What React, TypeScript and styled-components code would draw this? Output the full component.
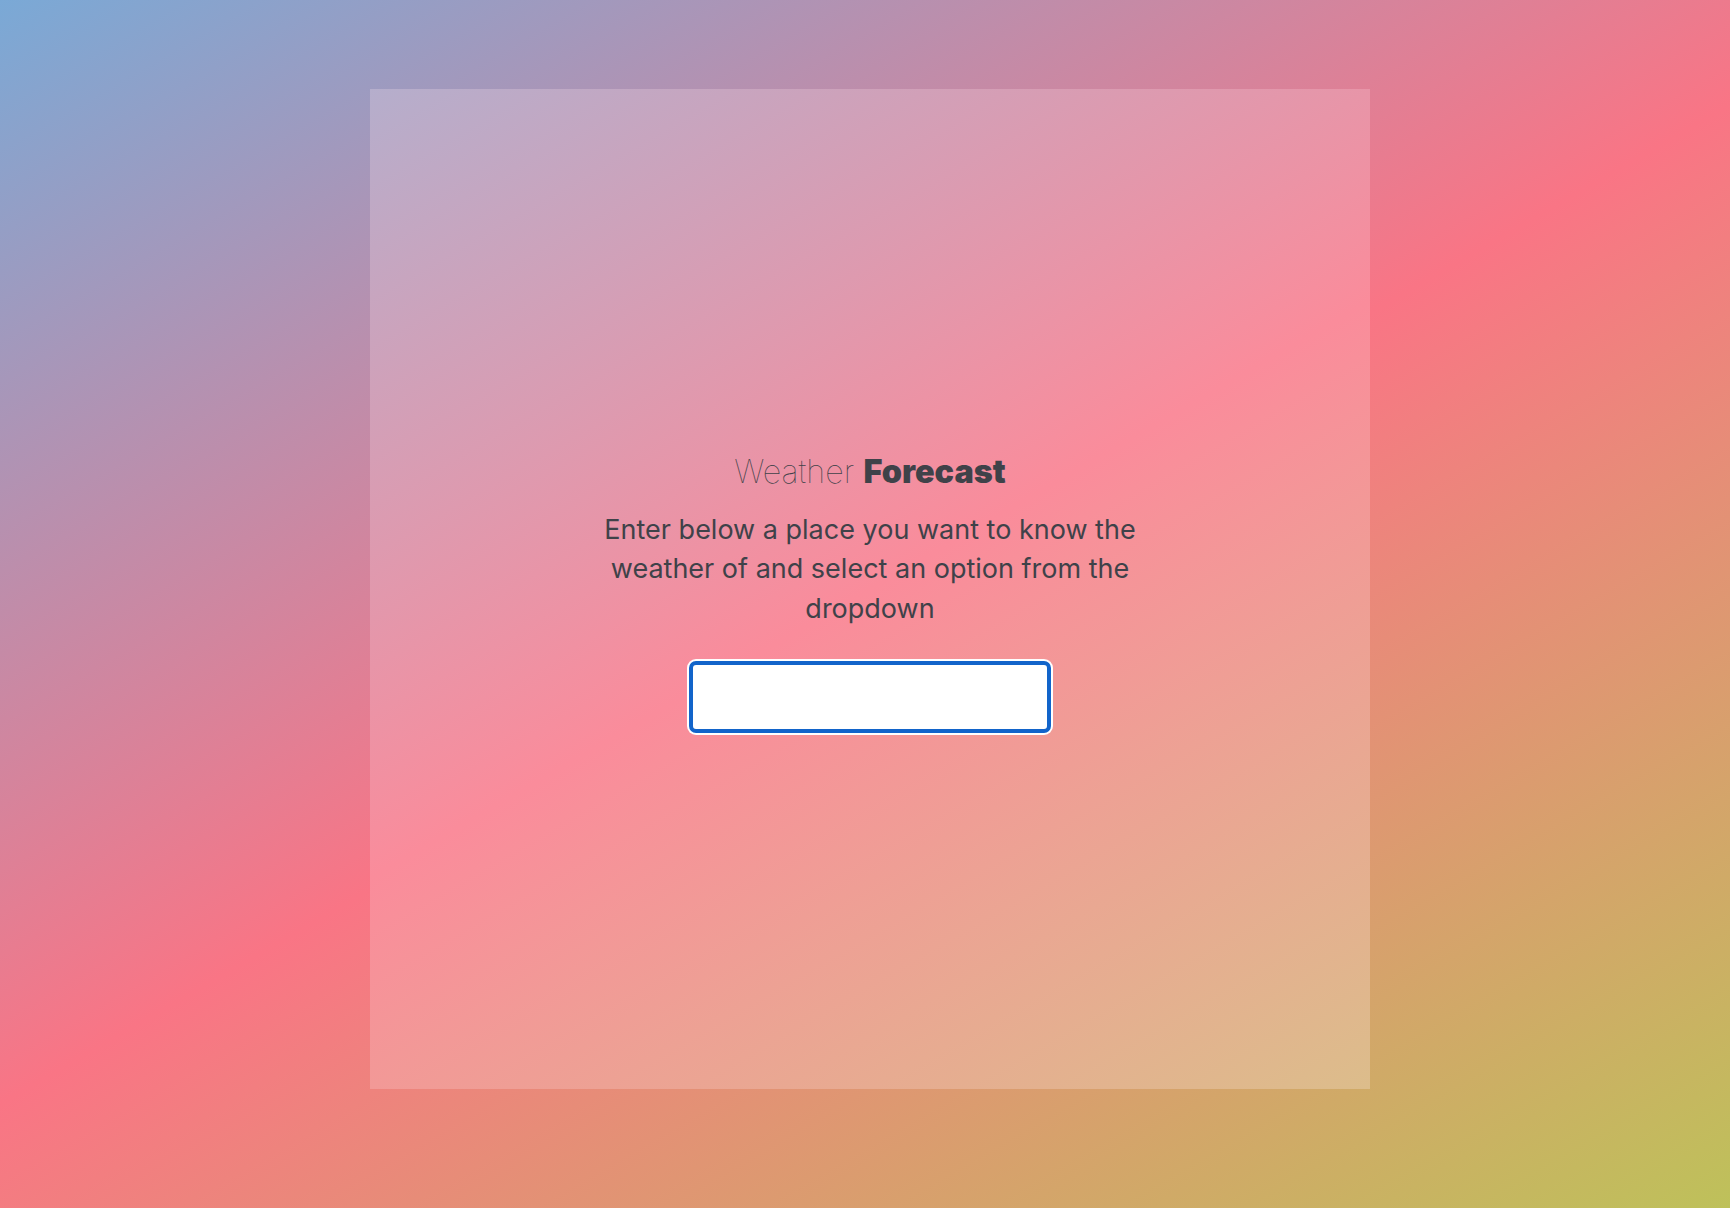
import styled, { createGlobalStyle } from "styled-components";

const GlobalStyle = createGlobalStyle`
  * {
    box-sizing: border-box;
  }

  html,
  body {
    margin: 0;
    padding: 0;
  }

  body {
    font-family: Inter, "Noto Sans", "Liberation Sans", sans-serif;
    color: #3f4249;
  }
`;

const App = () => {
  return (
    <>
      <GlobalStyle />
      <Page>
        <Card>
          <Title>
            <Light>Weather</Light> <Bold>Forecast</Bold>
          </Title>
          <Description>
            Enter below a place you want to know the weather of and select an
            option from the dropdown
          </Description>
          <SearchInput type="text" autoFocus aria-label="Place" />
        </Card>
      </Page>
    </>
  );
};

const Page = styled.main`
  min-height: 100vh;
  padding: 89px 0 119px 370px;
  display: flex;
  align-items: flex-start;
  background: linear-gradient(150deg, #7aa9d6 0%, #f97585 50%, #bec15a 100%);
`;

const Card = styled.section`
  width: 1000px;
  height: 1000px;
  padding-top: 7px;
  display: flex;
  flex-direction: column;
  align-items: center;
  justify-content: center;
  background: linear-gradient(150deg, #b5aecc 0%, #fa8c9b 50%, #dcbd8b 100%);
`;

const Title = styled.h1`
  margin: 0;
  font-size: 32.4px;
  line-height: 39px;
  font-weight: 400;
`;

const Light = styled.span`
  font-weight: 100;
`;

const Bold = styled.span`
  font-weight: 900;
`;

const Description = styled.p`
  margin: 19px 0 0;
  max-width: 580px;
  font-size: 27px;
  line-height: 39.5px;
  font-weight: 400;
  text-align: center;
`;

const SearchInput = styled.input`
  margin-top: 33px;
  width: 362px;
  height: 72px;
  padding: 0;
  border: 4px solid #1264ca;
  border-radius: 7px;
  box-shadow: 0 0 0 2px #ffffff;
  background: #ffffff;
  font-family: inherit;
  font-size: 32px;
  color: #3f4249;
  caret-color: #3f4249;
  outline: none;
`;

export default App;
